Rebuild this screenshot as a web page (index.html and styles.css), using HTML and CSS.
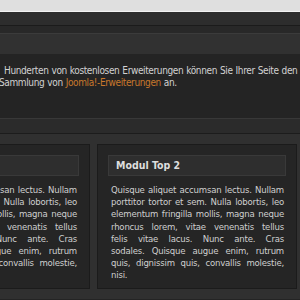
FILE: index.html
```html
<!DOCTYPE html>
<html>
<head>
<meta charset="utf-8">
<link rel="stylesheet" href="styles.css">
</head>
<body>
<div class="topbar"></div>
<div class="nav1"></div>
<div class="nav2"></div>
<div class="nav3"></div>
<div class="intro">
  <p class="l1">Hunderten von kostenlosen Erweiterungen können Sie Ihrer Seite den</p>
  <p class="l2">Sammlung von <a href="#">Joomla!-Erweiterungen</a> an.</p>
</div>
<div class="strip"></div>
<div class="modules">
  <div class="module">
    <h3 class="mtitle">Modul Top 1</h3>
    <div class="mtext">
      <span class="ln">Quisque aliquet accumsan lectus. Nullam</span>
      <span class="ln">porttitor tortor et sem. Nulla lobortis, leo</span>
      <span class="ln">elementum fringilla mollis, magna neque</span>
      <span class="ln">rhoncus lorem, vitae venenatis tellus</span>
      <span class="ln">felis vitae lacus. Nunc ante. Cras</span>
      <span class="ln">sodales. Quisque augue enim, rutrum</span>
      <span class="ln">quis, dignissim quis, convallis molestie,</span>
    </div>
  </div>
  <div class="module">
    <h3 class="mtitle">Modul Top 2</h3>
    <div class="mtext">
      <span class="ln">Quisque aliquet accumsan lectus. Nullam</span>
      <span class="ln">porttitor tortor et sem. Nulla lobortis, leo</span>
      <span class="ln">elementum fringilla mollis, magna neque</span>
      <span class="ln">rhoncus lorem, vitae venenatis tellus</span>
      <span class="ln">felis vitae lacus. Nunc ante. Cras</span>
      <span class="ln">sodales. Quisque augue enim, rutrum</span>
      <span class="ln">quis, dignissim quis, convallis molestie,</span>
      <span class="ln last">nisi.</span>
    </div>
  </div>
</div>
</body>
</html>
```
FILE: styles.css
```css
html, body {
  margin: 0;
  padding: 0;
  background: #242424;
  overflow: hidden;
  font-family: "DejaVu Sans Condensed", "DejaVu Sans", sans-serif;
  color: #d0d0d0;
}
.topbar {
  height: 11px;
  background: #dfdfdf;
  border-bottom: 1px solid #f2f2f2;
}
.nav1 {
  height: 13px;
  background: #2d2d2d;
  border-bottom: 1px solid #1b1b1b;
}
.nav2 {
  height: 7px;
  background: #282828;
  border-bottom: 1px solid #3b3b3b;
}
.nav3 {
  height: 20px;
  background: #313131;
}
.intro {
  padding: 11px 0 0 0;
  height: 53px;
  font-size: 10px;
  letter-spacing: -0.38px;
  word-spacing: 0.5px;
  line-height: 12px;
  white-space: nowrap;
  color: #d2d2d2;
}
.intro p {
  margin: 0;
}
.l1 {
  padding-left: 4px;
}
.intro .l2 {
  margin-left: -1px;
}
.intro a {
  color: #c9782c;
  text-decoration: none;
}
.strip {
  height: 14px;
  background: #2b2b2b;
  border-top: 1px solid #383838;
  border-bottom: 1px solid #1c1c1c;
}
.modules {
  display: flex;
  gap: 7px;
  margin-left: -110px;
  padding: 10px 3px 10px 0;
  background: #303030;
  width: 410px;
}
.module {
  width: 200px;
  height: 145px;
  background: #252525;
  border: 1px solid #1b1b1b;
  padding: 10px 10px 0 10px;
  box-sizing: border-box;
}
.mtitle {
  margin: 0 0 8px 0;
  height: 19px;
  background: #2e2e2e;
  border: 1px solid #393939;
  font-size: 10.5px;
  line-height: 19px;
  padding-left: 7px;
  color: #dedede;
  font-weight: bold;
}
.mtext {
  padding: 0 2px 0 3px;
  font-size: 9.5px;
  letter-spacing: -0.2px;
  line-height: 12.2px;
  color: #cfcfcf;
}
.ln {
  display: block;
  text-align: justify;
  text-align-last: justify;
  white-space: nowrap;
}
.ln.last {
  text-align-last: left;
}
```
